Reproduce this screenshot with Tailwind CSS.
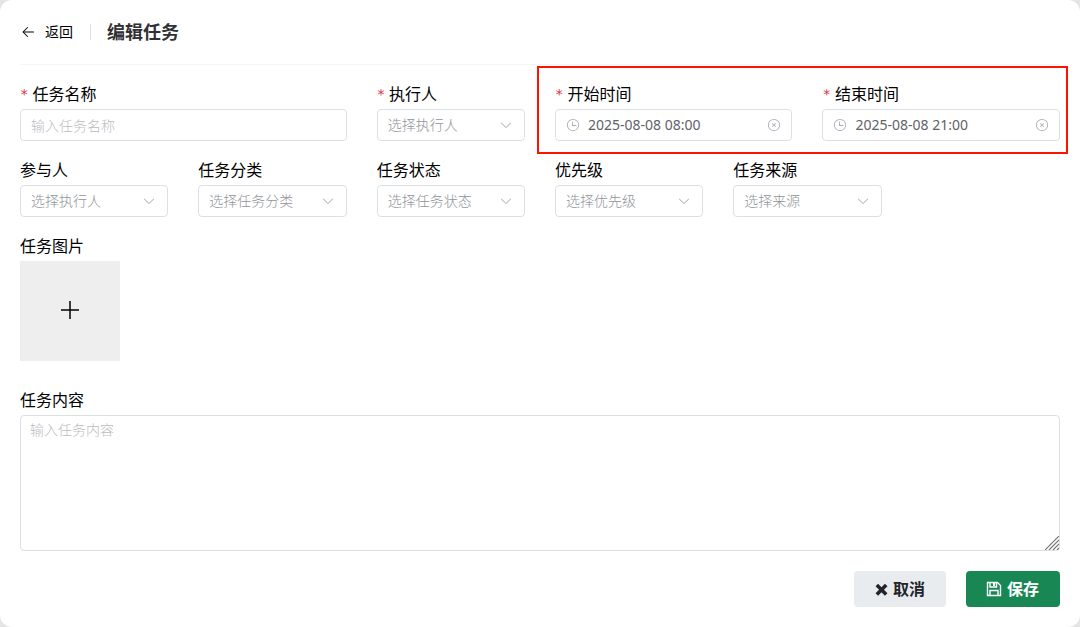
<!DOCTYPE html>
<html lang="zh-CN">
<head>
<meta charset="utf-8">
<meta name="viewport" content="width=device-width, initial-scale=1">
<title>编辑任务</title>
<script src="https://cdn.jsdelivr.net/npm/@tailwindcss/browser@4"></script>
</head>
<body class="bg-[#e4e4e4] font-['Noto_Sans','Noto_Sans_CJK_SC',sans-serif] text-black">
<svg class="hidden">
  <symbol id="chevron" viewBox="0 0 1024 1024"><path fill="currentColor" d="M831.9 340.9 512 652.700 192.100 340.900a30.600 30.600 0 0 0-42.700 0 29.100 29.100 0 0 0 0 41.600L489.700 714.200a32 32 0 0 0 44.600 0l340.300-331.700a29.100 29.100 0 0 0 0-41.700 30.600 30.600 0 0 0-42.700 0z"/></symbol>
  <symbol id="clock" viewBox="0 0 1024 1024"><path fill="currentColor" d="M512 896a384 384 0 1 0 0-768 384 384 0 0 0 0 768m0 64a448 448 0 1 1 0-896 448 448 0 0 1 0 896"/><path fill="currentColor" d="M480 256a32 32 0 0 1 32 32v256a32 32 0 0 1-64 0V288a32 32 0 0 1 32-32"/><path fill="currentColor" d="M480 512h256q32 0 32 32t-32 32H480q-32 0-32-32t32-32"/></symbol>
  <symbol id="clear" viewBox="0 0 1024 1024"><path fill="currentColor" d="m466.752 512-90.496-90.496a32 32 0 0 1 45.248-45.248L512 466.752l90.496-90.496a32 32 0 0 1 45.248 45.248L557.248 512l90.496 90.496a32 32 0 1 1-45.248 45.248L512 557.248l-90.496 90.496a32 32 0 0 1-45.248-45.248z"/><path fill="currentColor" d="M512 896a384 384 0 1 0 0-768 384 384 0 0 0 0 768m0 64a448 448 0 1 1 0-896 448 448 0 0 1 0 896"/></symbol>
</svg>
<main class="flex min-h-screen flex-col rounded-xl bg-white px-5 pb-5">
  <header class="flex h-[65px] items-center border-b border-[#f5f5f5] pb-px">
    <button type="button" class="flex items-center gap-[9px] text-sm">
      <svg class="size-4" viewBox="0 0 1024 1024" fill="currentColor"><path d="M224 480h640a32 32 0 1 1 0 64H224a32 32 0 0 1 0-64"/><path d="m237.248 512 265.408 265.344a32 32 0 0 1-45.312 45.312l-288-288a32 32 0 0 1 0-45.312l288-288a32 32 0 1 1 45.312 45.312z"/></svg>
      返回
    </button>
    <span class="mr-4 ml-[17px] h-4 w-px bg-[#dcdfe6]"></span>
    <h1 class="text-lg font-bold text-[#303133]">编辑任务</h1>
  </header>
  <form class="flex grow flex-col">
    <div class="grid grid-cols-6 gap-x-[30px] gap-y-[17px] pt-[17px]">
      <div class="col-span-2">
        <label for="name" class="mb-[3px] flex h-6 items-center gap-1"><span class="font-['DejaVu_Sans_Mono',monospace] text-sm leading-6 text-[#dc3545]">*</span>任务名称</label>
        <input id="name" placeholder="输入任务名称" class="block h-8 w-full rounded border border-[#dcdfe6] px-[10px] text-sm font-light placeholder:text-[#babcc0]">
      </div>
      <div>
        <label for="owner" class="mb-[3px] flex h-6 items-center gap-1"><span class="font-['DejaVu_Sans_Mono',monospace] text-sm leading-6 text-[#dc3545]">*</span>执行人</label>
        <div class="relative">
          <select id="owner" class="block h-8 w-full appearance-none rounded border border-[#dcdfe6] px-[10px] text-sm font-light text-[#909399]"><option>选择执行人</option></select>
          <svg class="pointer-events-none absolute top-[9px] right-3 size-[14px] text-[#a8abb2]"><use href="#chevron"/></svg>
        </div>
      </div>
      <div class="relative col-span-3 grid grid-cols-2 gap-x-[30px]">
        <div class="pointer-events-none absolute -top-4 -right-2 -bottom-[13px] -left-[18px] border-2 border-[#ff1200]"></div>
        <div>
          <label for="start" class="mb-[3px] flex h-6 items-center gap-1"><span class="font-['DejaVu_Sans_Mono',monospace] text-sm leading-6 text-[#dc3545]">*</span>开始时间</label>
          <div class="flex h-8 items-center gap-2 rounded border border-[#dcdfe6] px-[10px] text-[#a8abb2]">
            <svg class="size-[14px] shrink-0"><use href="#clock"/></svg>
            <input id="start" value="2025-08-08 08:00" class="min-w-0 grow text-sm text-[#606266]">
            <button type="button" aria-label="清除开始时间"><svg class="block size-[14px]"><use href="#clear"/></svg></button>
          </div>
        </div>
        <div>
          <label for="end" class="mb-[3px] flex h-6 items-center gap-1"><span class="font-['DejaVu_Sans_Mono',monospace] text-sm leading-6 text-[#dc3545]">*</span>结束时间</label>
          <div class="flex h-8 items-center gap-2 rounded border border-[#dcdfe6] px-[10px] text-[#a8abb2]">
            <svg class="size-[14px] shrink-0"><use href="#clock"/></svg>
            <input id="end" value="2025-08-08 21:00" class="min-w-0 grow text-sm text-[#606266]">
            <button type="button" aria-label="清除结束时间"><svg class="block size-[14px]"><use href="#clear"/></svg></button>
          </div>
        </div>
      </div>
      <div>
        <label for="member" class="mb-[3px] flex h-6 items-center">参与人</label>
        <div class="relative">
          <select id="member" class="block h-8 w-full appearance-none rounded border border-[#dcdfe6] px-[10px] text-sm font-light text-[#909399]"><option>选择执行人</option></select>
          <svg class="pointer-events-none absolute top-[9px] right-3 size-[14px] text-[#a8abb2]"><use href="#chevron"/></svg>
        </div>
      </div>
      <div>
        <label for="category" class="mb-[3px] flex h-6 items-center">任务分类</label>
        <div class="relative">
          <select id="category" class="block h-8 w-full appearance-none rounded border border-[#dcdfe6] px-[10px] text-sm font-light text-[#909399]"><option>选择任务分类</option></select>
          <svg class="pointer-events-none absolute top-[9px] right-3 size-[14px] text-[#a8abb2]"><use href="#chevron"/></svg>
        </div>
      </div>
      <div>
        <label for="status" class="mb-[3px] flex h-6 items-center">任务状态</label>
        <div class="relative">
          <select id="status" class="block h-8 w-full appearance-none rounded border border-[#dcdfe6] px-[10px] text-sm font-light text-[#909399]"><option>选择任务状态</option></select>
          <svg class="pointer-events-none absolute top-[9px] right-3 size-[14px] text-[#a8abb2]"><use href="#chevron"/></svg>
        </div>
      </div>
      <div>
        <label for="priority" class="mb-[3px] flex h-6 items-center">优先级</label>
        <div class="relative">
          <select id="priority" class="block h-8 w-full appearance-none rounded border border-[#dcdfe6] px-[10px] text-sm font-light text-[#909399]"><option>选择优先级</option></select>
          <svg class="pointer-events-none absolute top-[9px] right-3 size-[14px] text-[#a8abb2]"><use href="#chevron"/></svg>
        </div>
      </div>
      <div>
        <label for="source" class="mb-[3px] flex h-6 items-center">任务来源</label>
        <div class="relative">
          <select id="source" class="block h-8 w-full appearance-none rounded border border-[#dcdfe6] px-[10px] text-sm font-light text-[#909399]"><option>选择来源</option></select>
          <svg class="pointer-events-none absolute top-[9px] right-3 size-[14px] text-[#a8abb2]"><use href="#chevron"/></svg>
        </div>
      </div>
    </div>
    <div class="mt-[17px]">
      <label for="upload" class="mb-[3px] flex h-6 items-center">任务图片</label>
      <button id="upload" type="button" aria-label="添加图片" class="flex size-[100px] items-center justify-center bg-[#eeeeee]">
        <svg class="mb-[3px] size-[18px]" viewBox="0 0 18 18" stroke="#000" stroke-width="1.500"><path d="M9 0v18M0 9h18"/></svg>
      </button>
    </div>
    <div class="mt-[27px] flex grow flex-col">
      <label for="content" class="mb-[3px] flex h-6 items-center">任务内容</label>
      <div class="relative flex grow">
        <textarea id="content" placeholder="输入任务内容" class="block min-h-[136px] w-full resize-none rounded border border-[#dcdfe6] px-[9px] py-[3px] text-sm leading-[21px] font-light placeholder:text-[#babcc0]"></textarea>
        <svg class="pointer-events-none absolute right-px bottom-px size-[14px]" viewBox="0 0 14 14" fill="none" stroke="#777" stroke-width="1.200"><path d="M0 14 14 0M4 14 14 4M8 14l6-6M12 14l2-2"/></svg>
      </div>
    </div>
    <div class="mt-5 flex justify-end gap-5">
      <button type="button" class="flex h-9 items-center gap-[5px] rounded bg-[#e9ecef] px-[21px] font-bold text-[#212529]">
        <svg class="size-[13px]" viewBox="0 0 13 13" fill="none" stroke="currentColor" stroke-width="3.600"><path d="m1.800 2 9.400 9.400M11.200 2l-9.400 9.400"/></svg>
        取消
      </button>
      <button type="submit" class="flex h-9 items-center gap-[5px] rounded bg-[#198754] pr-[21px] pl-5 font-bold text-white">
        <svg class="size-4" viewBox="0 0 16 16" fill="none" stroke="currentColor" stroke-width="1.400"><path d="M1.500 1.500h10l3 3v10h-13zM4 1.500v4.500h6.500V1.500M4 14.500V9.500h8v5"/><path d="M8 2v3" stroke-width="2"/></svg>
        保存
      </button>
    </div>
  </form>
</main>
</body>
</html>
